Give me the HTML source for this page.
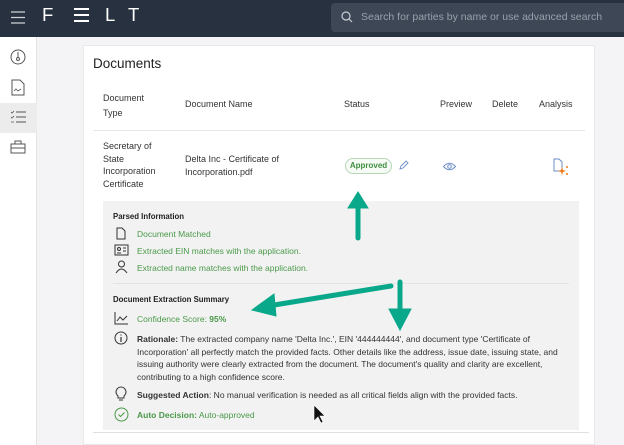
<!DOCTYPE html><html><head><style>
*{margin:0;padding:0;box-sizing:border-box}
body{width:624px;height:445px;overflow:hidden;background:#f4f4f6;font-family:"Liberation Sans",sans-serif;position:relative;color:#333}
.hdr{position:absolute;left:0;top:0;width:624px;height:37px;background:#27313f}
.side{position:absolute;left:0;top:37px;width:37px;height:408px;background:#fff;border-right:1px solid #e3e3e3}
.card{position:absolute;left:83px;top:45px;width:512px;height:400px;background:#fff;border:1px solid #e8e8e8}
.t{position:absolute;font-size:8.5px;white-space:nowrap;line-height:12.5px}
.tb{font-size:9px}
.g{color:#4a9a4a}
b{font-weight:bold}
.panel{position:absolute;left:103px;top:201px;width:476px;height:229px;background:#f2f2f2}
.lg{position:absolute;top:4px;color:#fff;font-size:18.5px;font-weight:normal}
</style></head><body>
<div class="hdr">
<svg style="position:absolute;left:11px;top:11px" width="14" height="13"><path d="M0 1H14M0 6.5H14M0 12H14" stroke="#cfd3d8" stroke-width="1.3"/></svg>
<div class="lg" style="left:42px">F</div>
<svg style="position:absolute;left:74px;top:8px" width="15" height="14"><path d="M0 1H15M0 7H15M0 13H15" stroke="#fff" stroke-width="2"/></svg>
<div class="lg" style="left:105px">L</div>
<div class="lg" style="left:128px">T</div>
<div style="position:absolute;left:331px;top:3px;width:300px;height:29px;background:#3d4756;border-radius:4px"></div>
<svg style="position:absolute;left:341px;top:11px" width="12" height="12"><circle cx="5" cy="5" r="4" stroke="#c9cdd3" fill="none" stroke-width="1.2"/><path d="M8 8L11 11" stroke="#c9cdd3" stroke-width="1.2"/></svg>
<div class="t" style="left:361px;top:11px;color:#9aa1ab;font-size:10.5px">Search for parties by name or use advanced search</div>
</div>
<div class="side">
<svg style="position:absolute;left:10px;top:12px" width="16" height="16"><circle cx="8" cy="8" r="7" fill="none" stroke="#555" stroke-width="1"/><path d="M8 3V9" stroke="#555"/><circle cx="8" cy="10" r="1.5" fill="none" stroke="#555"/></svg>
<svg style="position:absolute;left:11px;top:42px" width="14" height="17"><path d="M1 1H9L13 5V16H1Z" fill="none" stroke="#555"/><path d="M3 12L5 10L7 12L10 10" fill="none" stroke="#555" stroke-width=".8"/></svg>
<div style="position:absolute;left:0;top:66px;width:37px;height:30px;background:#ececec"></div>
<svg style="position:absolute;left:10px;top:73px" width="16" height="14"><path d="M6 2H16M6 7H16M6 12H16" stroke="#555"/><path d="M1 2L2 3L4 1M1 7L2 8L4 6M1 12H4" stroke="#555" stroke-width=".8" fill="none"/></svg>
<svg style="position:absolute;left:10px;top:103px" width="16" height="14"><rect x="1" y="4" width="14" height="9" fill="none" stroke="#555"/><path d="M5 4V1H11V4M1 8H15" stroke="#555" fill="none"/></svg>
</div>
<div class="card"></div>
<div class="t" style="left:93px;top:58px;font-size:13.5px;color:#222">Documents</div>
<div class="t tb" style="left:103px;top:91px;line-height:15px">Document<br>Type</div>
<div class="t tb" style="left:185px;top:98px">Document Name</div>
<div class="t tb" style="left:344px;top:98px">Status</div>
<div class="t tb" style="left:440px;top:98px">Preview</div>
<div class="t tb" style="left:492px;top:98px">Delete</div>
<div class="t tb" style="left:539px;top:98px">Analysis</div>
<div style="position:absolute;left:93px;top:130px;width:492px;height:1px;background:#e6e6e6"></div>
<div class="t tb" style="left:103px;top:140px;line-height:12.7px">Secretary of<br>State<br>Incorporation<br>Certificate</div>
<div class="t tb" style="left:185px;top:153px">Delta Inc - Certificate of<br>Incorporation.pdf</div>
<div style="position:absolute;left:345px;top:158px;width:47px;height:16px;border:1px solid #b9d6b9;border-radius:8px;background:#f6fbf6;color:#3f8f3f;font-size:8px;font-weight:bold;text-align:center;line-height:14px">Approved</div>
<svg style="position:absolute;left:399px;top:160px" width="10" height="10"><path d="M1 9L2 6L7 1L9 3L4 8Z" fill="none" stroke="#6d8fc7" stroke-width=".9"/></svg>
<svg style="position:absolute;left:443px;top:162px" width="13" height="9"><path d="M0.5 4.5Q6.5 -2 12.5 4.5Q6.5 11 0.5 4.5Z" fill="none" stroke="#6d8fc7"/><circle cx="6.5" cy="4.5" r="1.8" fill="none" stroke="#6d8fc7"/></svg>
<svg style="position:absolute;left:553px;top:158px" width="16" height="18"><path d="M1 1H6L9 4V13H1Z" fill="none" stroke="#6d8fc7"/><path d="M9 9L10 12L13 13L10 14L9 17L8 14L5 13L8 12Z" fill="#f07a1a"/><circle cx="14" cy="9" r="1" fill="#f07a1a"/><circle cx="14" cy="16" r="1" fill="#f07a1a"/></svg>
<div class="panel"></div>
<div class="t" style="left:113px;top:211px;font-weight:bold;font-size:7.8px;color:#222">Parsed Information</div>
<svg style="position:absolute;left:116px;top:227px" width="10" height="13"><path d="M1 1H6L9 4V12H1Z" fill="none" stroke="#333"/></svg>
<div class="t g" style="left:137px;top:228px">Document Matched</div>
<svg style="position:absolute;left:114px;top:244px" width="15" height="12"><rect x="1" y="1" width="13" height="10" fill="none" stroke="#333"/><circle cx="5" cy="5" r="1.5" fill="none" stroke="#333"/><path d="M3 9H7M9 4H12M9 7H12" stroke="#333"/></svg>
<div class="t g" style="left:137px;top:245px">Extracted EIN matches with the application.</div>
<svg style="position:absolute;left:115px;top:260px" width="13" height="14"><circle cx="6.5" cy="4" r="3" fill="none" stroke="#333"/><path d="M1 13Q6.5 5 12 13" fill="none" stroke="#333"/></svg>
<div class="t g" style="left:137px;top:262px">Extracted name matches with the application.</div>
<div style="position:absolute;left:113px;top:283px;width:456px;height:1px;background:#e4e4e4"></div>
<div class="t" style="left:113px;top:294px;font-weight:bold;font-size:7.8px;color:#222">Document Extraction Summary</div>
<svg style="position:absolute;left:114px;top:312px" width="14" height="13"><path d="M1 0V12H14M3 9L6 5L9 8L13 4" fill="none" stroke="#333"/></svg>
<div class="t g" style="left:137px;top:313px">Confidence Score: <b>95%</b></div>
<svg style="position:absolute;left:114px;top:331px" width="14" height="14"><circle cx="7" cy="7" r="6" fill="none" stroke="#333"/><path d="M7 6V11M7 3.5V4.5" stroke="#333" stroke-width="1.2"/></svg>
<div class="t" style="left:137px;top:333px;line-height:12.5px"><b>Rationale:</b> The extracted company name 'Delta Inc.', EIN '444444444', and document type 'Certificate of<br>Incorporation' all perfectly match the provided facts. Other details like the address, issue date, issuing state, and<br>issuing authority were clearly extracted from the document. The document's quality and clarity are excellent,<br>contributing to a high confidence score.</div>
<svg style="position:absolute;left:115px;top:386px" width="12" height="16"><path d="M3 10Q0 7 1.5 4Q3 1 6 1Q9 1 10.5 4Q12 7 9 10V12H3Z" fill="none" stroke="#333"/><path d="M4 14H8" stroke="#333"/></svg>
<div class="t" style="left:137px;top:389px"><b>Suggested Action</b>: No manual verification is needed as all critical fields align with the provided facts.</div>
<svg style="position:absolute;left:114px;top:407px" width="15" height="15"><circle cx="7.5" cy="7.5" r="6.5" fill="none" stroke="#4a9a4a"/><path d="M4.5 7.5L6.5 9.5L10.5 5.5" fill="none" stroke="#4a9a4a"/></svg>
<div class="t g" style="left:137px;top:409px"><b>Auto Decision:</b> Auto-approved</div>
<div style="position:absolute;left:93px;top:432px;width:496px;height:1px;background:#e0e0e0"></div>
<svg style="position:absolute;left:0;top:0" width="624" height="445">
<g fill="#0aa88a" stroke="#0aa88a" stroke-linecap="round">
<path d="M358 238V205" stroke-width="5"/><path d="M348 208L358 192L368 208Z" stroke-width="1"/>
<path d="M391 286L268 306" stroke-width="5"/><path d="M252 310L274 294L276 316Z" stroke-width="1"/>
<path d="M400 282V313" stroke-width="5"/><path d="M389 309L400 330L411 309Z" stroke-width="1"/>
</g>
<path d="M314 405V421L318 417L321 423L323 422L320 416L325 416Z" fill="#111" stroke="#fff" stroke-width=".6"/>
</svg>
</body></html>
